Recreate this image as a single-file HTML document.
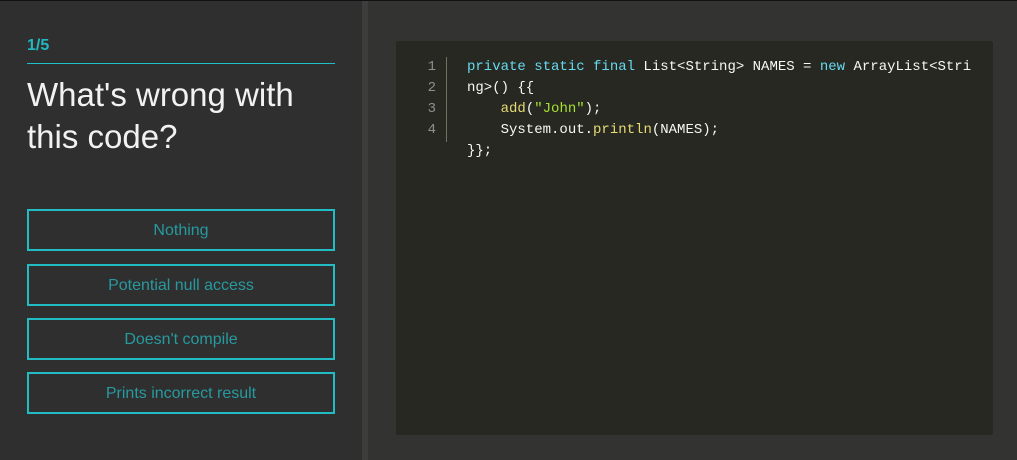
<!DOCTYPE html>
<html><head><style>
html,body{margin:0;padding:0}
body{width:1017px;height:460px;background:#333332;position:relative;overflow:hidden;font-family:"Liberation Sans",sans-serif}
.top{position:absolute;left:0;top:0;width:1017px;height:1px;background:#111}
.left{position:absolute;left:0;top:1px;width:362px;height:459px;background:#2f2f2f}
.div{position:absolute;left:362px;top:1px;width:6px;height:459px;background:#3d3d3b}
.num{position:absolute;left:27px;top:37px;color:#22b8c0;font-size:16px;font-weight:bold}
.rule{position:absolute;left:27px;top:63px;width:308px;height:1px;background:#1fc0c8}
.title{position:absolute;left:27px;top:74px;color:#f2f2f2;font-size:33px;line-height:42px;width:290px}
.btn{position:absolute;left:27px;width:304px;height:38px;border:2px solid #21bcc4;color:#279a9f;font-size:16px;text-align:center;line-height:40px}
.code{position:absolute;left:396px;top:41px;width:597px;height:394px;background:#272822;border-radius:2px}
.ln{position:absolute;left:410px;top:57px;width:26px;text-align:right;color:#8f908a;font:14px/21px "Liberation Mono",monospace}
.gut{position:absolute;left:446px;top:57px;width:1px;height:85px;background:#75715e}
pre{position:absolute;left:467px;top:57px;margin:0;color:#f8f8f2;font:14px/21px "Liberation Mono",monospace}
.k{color:#66d9ef}.f{color:#e6db74}.s{color:#a6e22e}
</style></head><body>
<div class="top"></div>
<div class="left"></div>
<div class="div"></div>
<div class="num">1/5</div>
<div class="rule"></div>
<div class="title">What's wrong with this code?</div>
<div class="btn" style="top:209px">Nothing</div>
<div class="btn" style="top:264px">Potential null access</div>
<div class="btn" style="top:318px">Doesn't compile</div>
<div class="btn" style="top:372px">Prints incorrect result</div>
<div class="code"></div>
<div class="ln">1<br>2<br>3<br>4</div>
<div class="gut"></div>
<pre><span class="k">private static final</span> List&lt;String&gt; NAMES = <span class="k">new</span> ArrayList&lt;Stri
ng&gt;() {{
    <span class="f">add</span>(<span class="s">"John"</span>);
    System.out.<span class="f">println</span>(NAMES);
}};</pre>
</body></html>
